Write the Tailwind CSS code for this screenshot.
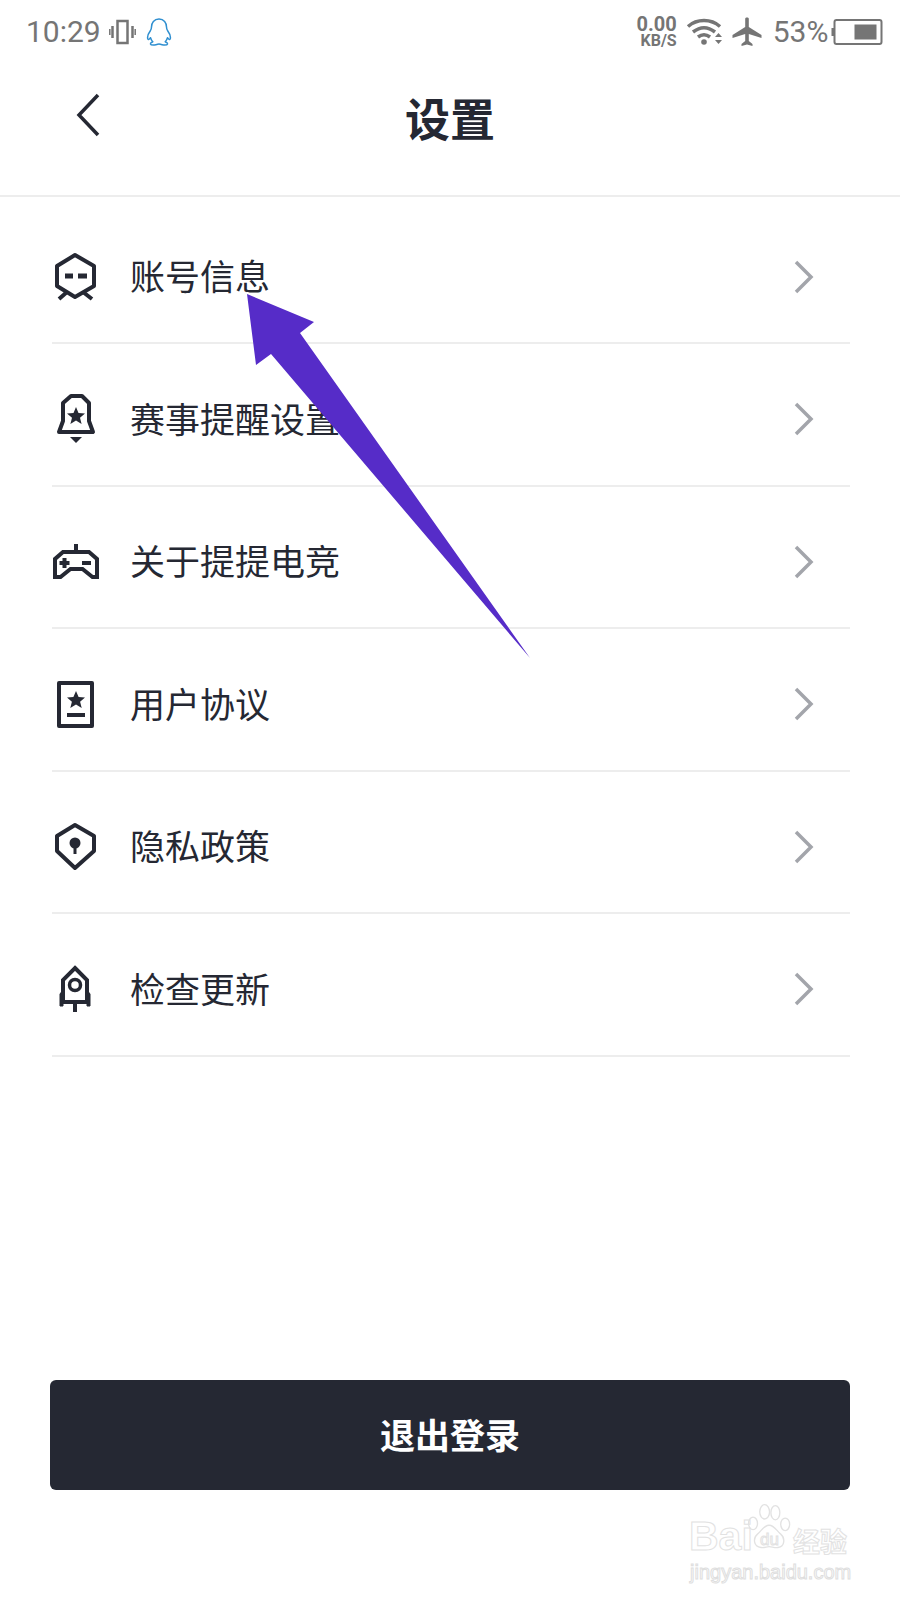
<!DOCTYPE html>
<html lang="zh-CN">
<head>
    <meta charset="UTF-8">
    <title>设置</title>
    <script src="https://cdn.jsdelivr.net/npm/@tailwindcss/browser@4"></script>
</head>
<body class="bg-white">
<div class="relative w-[900px] h-[1600px] overflow-hidden bg-white font-['Noto_Sans_CJK_SC','Noto_Sans',sans-serif] text-[#252833]">

    <!-- status bar -->
    <div class="h-[64px] flex items-center pl-[26px] text-[#757575] font-['Roboto',sans-serif]">
        <span class="text-[30px] leading-none">10:29</span>
        <svg class="ml-[8px]" width="28" height="28" viewBox="0 0 28 28" fill="none" stroke="#757575">
            <rect x="8.5" y="3" width="10" height="22" stroke-width="2.5"/>
            <path d="M3.5 8v12M23.5 8v12" stroke-width="2.5"/>
            <path d="M0.8 11v6M26.2 11v6" stroke-width="1.5"/>
        </svg>
        <svg class="ml-[9px]" width="26" height="28" viewBox="0 0 26 28" fill="none" stroke="#2f8fd0" stroke-width="1.5" stroke-linejoin="round">
            <path d="M13 1c-5 0-7.500 3.800-7.500 8 0 1.700-.2 2.500-1.300 4-1.700 2.300-3 5-2.500 7.500.5 1.700 1.700.8 2.800-.8.5 1.700 1.300 3 2.300 4-1.600.6-2.500 1.400-2.300 2.300.3 1 3 1.200 5.500.8 1.300-.2 2.300-.8 3-.8s1.700.6 3 .8c2.500.4 5.200.2 5.500-.8.2-.9-.7-1.700-2.300-2.300 1-1 1.800-2.300 2.300-4 1.100 1.600 2.300 2.500 2.800.8.5-2.500-.8-5.200-2.500-7.500-1.100-1.500-1.300-2.300-1.300-4 0-4.200-2.500-8-7.500-8z"/>
        </svg>

        <div class="ml-[463px] w-[42px] flex flex-col items-end font-bold">
            <span class="text-[20px] leading-[18px]">0.00</span>
            <span class="text-[16px] leading-[16px]">KB/S</span>
        </div>
        <svg class="ml-[9px]" width="38" height="28" viewBox="0 0 38 28" fill="none" stroke="#757575" stroke-width="3.500">
            <path d="M2 8.500C11 .5 25 .5 34 8.500"/>
            <path d="M7 14c7-5.500 15-5.500 22 0"/>
            <path d="M12 19c4-3 8-3 12 0"/>
            <circle cx="18" cy="24" r="2.800" fill="#757575" stroke="none"/>
            <path d="M29 19l3.500-4 3.500 4zM29 22l3.500 4 3.500-4z" fill="#757575" stroke="none"/>
        </svg>
        <svg class="ml-[8px]" width="30" height="30" viewBox="0 0 30 30" fill="#757575">
            <path d="M13.200 1.500c0-1.500 3.600-1.500 3.600 0v8.500L29.500 18v3L16.800 17v7l3.700 3v2l-5.500-1.500L9.500 29v-2l3.700-3v-7L.5 21v-3l12.700-8z"/>
        </svg>
        <span class="ml-[11px] text-[30px] leading-none">53%</span>
        <svg class="ml-[3px]" width="52" height="26" viewBox="0 0 52 26" fill="none">
            <rect x="3.500" y="1" width="47" height="24" rx="2" stroke="#757575" stroke-width="2"/>
            <rect x="0.500" y="9" width="3" height="8" fill="#757575"/>
            <rect x="23.500" y="5.500" width="22" height="15" fill="#757575"/>
        </svg>
    </div>

    <!-- title bar -->
    <div class="relative h-[133px] border-b-2 border-[#ededed] flex items-center justify-center">
        <svg class="absolute left-[70px] top-[26px]" width="34" height="48" viewBox="0 0 34 48" fill="none" stroke="#252833" stroke-width="3.500">
            <path d="M28 5L9 25l19 20"/>
        </svg>
        <h1 class="text-[45px] leading-none font-bold -mt-[24px]">设置</h1>
    </div>

    <!-- list -->
    <ul class="ml-[52px] mr-[50px]">
        <li class="h-[147px] pt-[14px] border-b-2 border-[#ededed] flex items-center">
            <svg width="48" height="60" viewBox="0 0 48 60" fill="none" stroke="#252833" stroke-width="4" stroke-linejoin="round">
                <path d="M23 8l19 11v20L23 50 5 39V19z"/>
                <path d="M15 45l-8 7M31 45l9 7"/>
                <path d="M13 29h8M26 29h9" stroke-width="5"/>
            </svg>
            <span class="ml-[30px] -mt-[4px] text-[35px] leading-none">账号信息</span>
            <svg class="ml-auto mr-[34px]" width="24" height="36" viewBox="0 0 24 36" fill="none" stroke="#a3a5ab" stroke-width="3.500"><path d="M4 3l15 15L4 33"/></svg>
        </li>
        <li class="h-[142.500px] pt-[10px] border-b-2 border-[#ededed] flex items-center">
            <svg width="48" height="60" viewBox="0 0 48 60" fill="none" stroke="#252833" stroke-width="4" stroke-linejoin="round">
                <path d="M19 7h11l7 7v18l4 11H7l4-11V14z"/>
                <path d="M18 48h12l-6 6z" fill="#252833" stroke="none"/>
                <path d="M24 18l2.500 6 6.500.5-5 4.200 1.600 6.300-5.600-3.400-5.600 3.400 1.600-6.300-5-4.200 6.500-.5z" fill="#252833" stroke="none"/>
            </svg>
            <span class="ml-[30px] -mt-[4px] text-[35px] leading-none">赛事提醒设置</span>
            <svg class="ml-auto mr-[34px]" width="24" height="36" viewBox="0 0 24 36" fill="none" stroke="#a3a5ab" stroke-width="3.500"><path d="M4 3l15 15L4 33"/></svg>
        </li>
        <li class="h-[142.500px] pt-[10px] border-b-2 border-[#ededed] flex items-center">
            <svg width="48" height="60" viewBox="0 0 48 60" fill="none" stroke="#252833" stroke-width="4" stroke-linejoin="miter">
                <path d="M24 12v8"/>
                <path d="M11 20h26l8 7v18h-4.500l-10-8H18.500l-10 8H3V27z"/>
                <path d="M7.500 31h10M12.500 26v10M30 31h9"/>
            </svg>
            <span class="ml-[30px] -mt-[4px] text-[35px] leading-none">关于提提电竞</span>
            <svg class="ml-auto mr-[34px]" width="24" height="36" viewBox="0 0 24 36" fill="none" stroke="#a3a5ab" stroke-width="3.500"><path d="M4 3l15 15L4 33"/></svg>
        </li>
        <li class="h-[142.500px] pt-[10px] border-b-2 border-[#ededed] flex items-center">
            <svg width="48" height="60" viewBox="0 0 48 60" fill="none" stroke="#252833" stroke-width="4" stroke-linejoin="round">
                <rect x="7" y="9" width="33" height="43"/>
                <path d="M24 17l2.600 6 6.400.5-4.900 4.200 1.600 6.300-5.700-3.400-5.700 3.400 1.600-6.300-4.900-4.200 6.400-.5z" fill="#252833" stroke="none"/>
                <path d="M15 41h18"/>
            </svg>
            <span class="ml-[30px] -mt-[4px] text-[35px] leading-none">用户协议</span>
            <svg class="ml-auto mr-[34px]" width="24" height="36" viewBox="0 0 24 36" fill="none" stroke="#a3a5ab" stroke-width="3.500"><path d="M4 3l15 15L4 33"/></svg>
        </li>
        <li class="h-[142.500px] pt-[10px] border-b-2 border-[#ededed] flex items-center">
            <svg width="48" height="60" viewBox="0 0 48 60" fill="none" stroke="#252833" stroke-width="4" stroke-linejoin="round">
                <path d="M23 8l19 11v15L23 51 5 34V19z"/>
                <circle cx="23" cy="26" r="5.500" fill="#252833" stroke="none"/>
                <path d="M23 28v9" stroke-width="3"/>
            </svg>
            <span class="ml-[30px] -mt-[4px] text-[35px] leading-none">隐私政策</span>
            <svg class="ml-auto mr-[34px]" width="24" height="36" viewBox="0 0 24 36" fill="none" stroke="#a3a5ab" stroke-width="3.500"><path d="M4 3l15 15L4 33"/></svg>
        </li>
        <li class="h-[142.500px] pt-[10px] border-b-2 border-[#ededed] flex items-center">
            <svg width="48" height="60" viewBox="0 0 48 60" fill="none" stroke="#252833" stroke-width="4" stroke-linejoin="miter">
                <path d="M23 9l12 12v22H11V21z"/>
                <circle cx="23" cy="26" r="5.500" stroke-width="3.500"/>
                <path d="M11 31l-3 4v12h3zM35 31l3 4v12h-3z" fill="#252833" stroke="#252833" stroke-width="1"/>
                <path d="M23 44v9"/>
            </svg>
            <span class="ml-[30px] -mt-[4px] text-[35px] leading-none">检查更新</span>
            <svg class="ml-auto mr-[34px]" width="24" height="36" viewBox="0 0 24 36" fill="none" stroke="#a3a5ab" stroke-width="3.500"><path d="M4 3l15 15L4 33"/></svg>
        </li>
    </ul>

    <button class="block ml-[50px] mt-[323px] w-[800px] h-[110px] rounded-[6px] bg-[#252833] text-white text-[35px] font-bold">退出登录</button>

    <!-- annotation arrow -->
    <svg class="absolute left-0 top-0 pointer-events-none" width="900" height="700" viewBox="0 0 900 700">
        <path d="M247 294L314 322 300 333 530 658 271 354 256 365z" fill="#562cc8"/>
    </svg>

    <!-- watermark -->
    <div class="absolute left-[688px] top-[1500px] w-[170px] h-[90px] pointer-events-none">
        <span class="absolute left-[1px] top-[16px] text-[41px] leading-none font-bold font-['Liberation_Sans',sans-serif] text-white [-webkit-text-stroke:1px_#e2e2e2]">Bai</span>
        <svg class="absolute left-[57px] top-[2px]" width="50" height="50" viewBox="0 0 56 56" fill="none" stroke="#e2e2e2" stroke-width="1.500">
            <ellipse cx="9" cy="24" rx="5" ry="7"/>
            <ellipse cx="22" cy="11" rx="5.500" ry="8"/>
            <ellipse cx="34" cy="12" rx="5" ry="8"/>
            <ellipse cx="45" cy="25" rx="5" ry="7"/>
            <path d="M27 26c-6 0-8 6-13 10-5 4-5 14 4 15 4 .5 6-1 9-1s6 1.500 10 1c8-1 8-11 3-15-5-4-7-10-13-10z"/>
        </svg>
        <span class="absolute left-[72px] top-[31px] text-[17px] leading-none font-['Liberation_Sans',sans-serif] text-white [-webkit-text-stroke:1px_#e2e2e2]">du</span>
        <span class="absolute left-[105px] top-[27px] text-[27px] leading-none font-bold text-white [-webkit-text-stroke:1px_#e2e2e2]">经验</span>
        <span class="absolute left-[2px] top-[62px] text-[20px] leading-none font-['Liberation_Sans',sans-serif] text-white [-webkit-text-stroke:1px_#dedede] whitespace-nowrap">jingyan.baidu.com</span>
    </div>
</div>
</body>
</html>
